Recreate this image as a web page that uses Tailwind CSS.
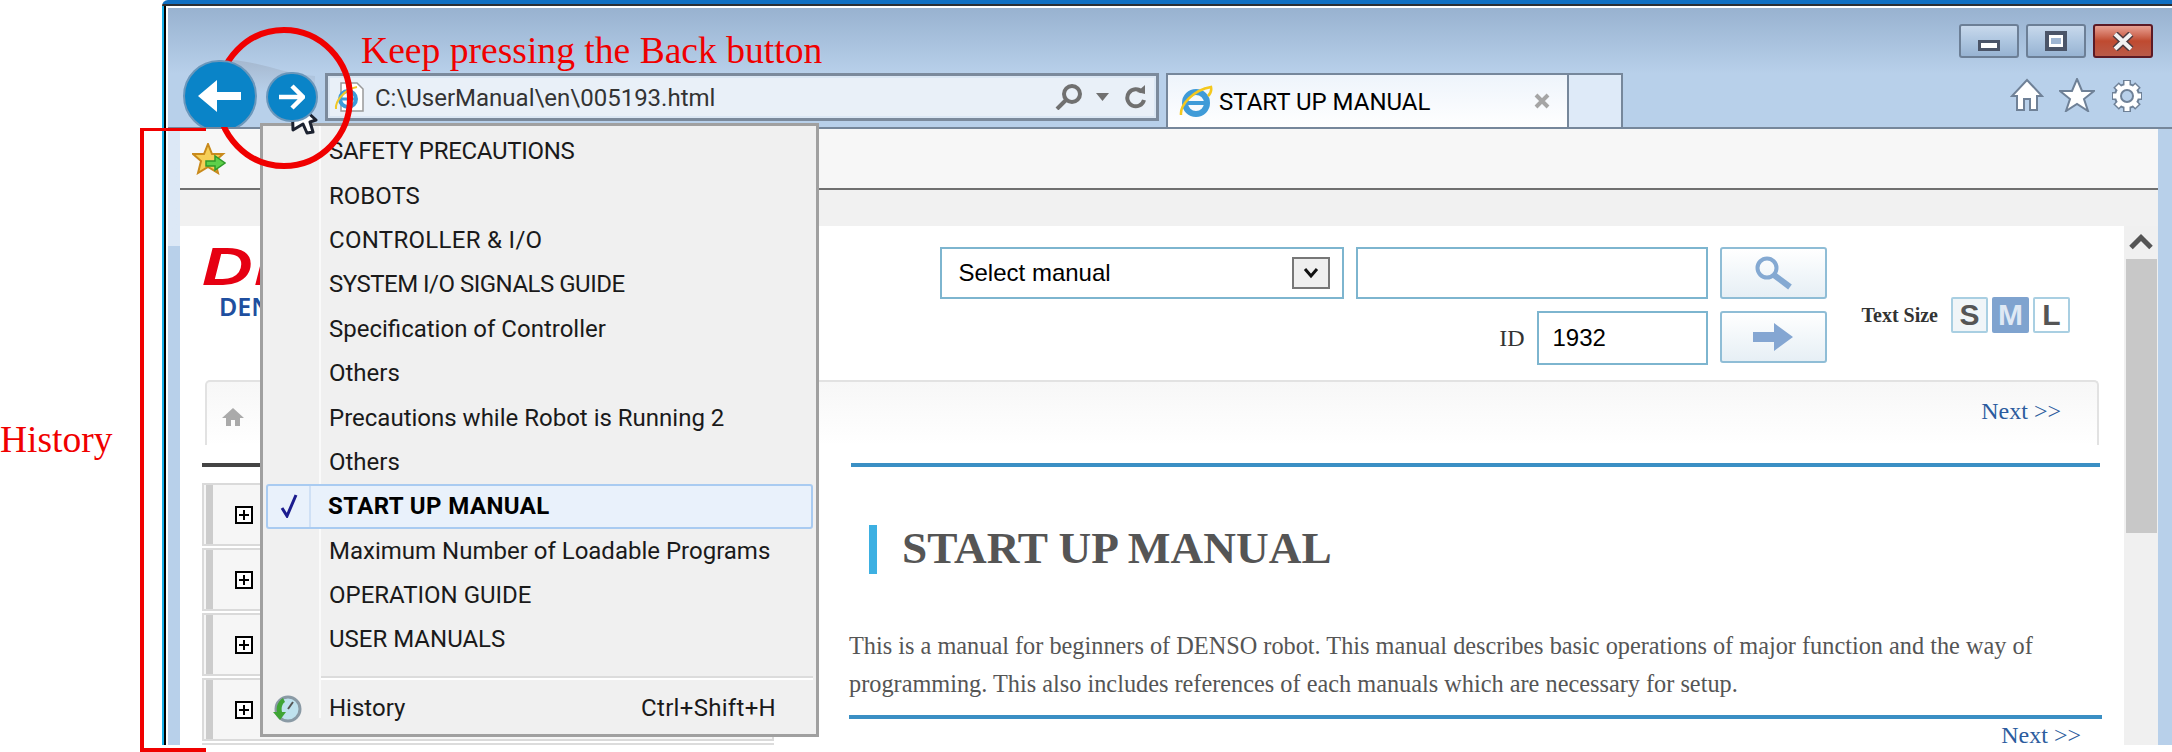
<!DOCTYPE html>
<html>
<head>
<meta charset="utf-8">
<title>Keep pressing the Back button</title>
<script src="https://cdn.jsdelivr.net/npm/@tailwindcss/browser@4"></script>
</head>
<body class="bg-white">
<div class="relative w-[2172px] h-[752px] overflow-hidden bg-white font-['Liberation_Serif',serif]">

    <!-- browser window -->
    <div class="ml-[162px] h-[745px] flex flex-col overflow-hidden rounded-tl-[6px]">
        <div class="h-[4px] bg-[#0f6fc2] shrink-0"></div>
        <div class="h-[2px] bg-[#2b2f33] shrink-0"></div>
        <div class="flex-1 flex min-h-0 border-l-[2px] border-[#17aee6]">
            <div class="flex-1 flex min-w-0 border-l-[2px] border-black">
                <div class="flex-1 flex flex-col min-w-0 border-l-[2px] border-white">

                    <!-- chrome -->
                    <div class="h-[123px] shrink-0 flex items-start overflow-hidden border-b-[2px] border-[#76879b] bg-gradient-to-b from-[#98b2d0] to-[#b8d0ea] to-[55%] border-t-[2px] border-t-white relative">
                        <svg class="absolute left-[55px] top-[50px]" width="100" height="50" viewBox="0 0 100 50">
                            <defs><linearGradient id="halo" x1="0" y1="0" x2="0" y2="1"><stop offset="0" stop-color="#a5b8cf"/><stop offset="0.7" stop-color="#b8d0ea"/></linearGradient></defs>
                            <path d="M8 2 C40 4 60 16 92 18 L92 48 L8 48 Z" fill="url(#halo)"/>
                        </svg>
                        <div class="w-[74px] h-[72px] ml-[15px] mt-[52px] rounded-full bg-[#0a84c8] border-[2px] border-[#6b97bb] flex items-center justify-center shrink-0 relative z-10">
                            <svg width="46" height="34" viewBox="0 0 46 34"><path d="M1 17 L20 1 V13 H44 V21 H20 V33 Z" fill="#fff"/></svg>
                        </div>
                        <div class="w-[52px] h-[50px] ml-[9px] mt-[64px] rounded-full bg-[#0a84c8] border-[2px] border-[#6b97bb] flex items-center justify-center shrink-0 relative z-10">
                            <svg width="26" height="26" viewBox="0 0 26 26"><path d="M0 13 H24 M13 2 L24 13 L13 24" fill="none" stroke="#fff" stroke-width="4.5"/></svg>
                        </div>
                        <!-- address bar -->
                        <div class="w-[834px] h-[48px] ml-[7px] mt-[65px] shrink-0 flex items-center border-[3px] border-[#7b8a9c] outline-[2px] outline-[#dbe7f4] outline-offset-[-5px] bg-[#e9f0f8]">
                            <svg class="ml-[5px] shrink-0" width="32" height="32" viewBox="0 0 32 32">
                                <path d="M8 2 H24 L30 8 V30 H8 Z" fill="#fff" stroke="#999" stroke-width="1.5"/>
                                <circle cx="15" cy="18" r="8" fill="none" stroke="#3f9bd8" stroke-width="4"/>
                                <path d="M8 18 H23" stroke="#3f9bd8" stroke-width="3"/>
                                <path d="M3 28 C2 20 12 8 24 6" fill="none" stroke="#f0c92a" stroke-width="2"/>
                            </svg>
                            <span class="ml-[10px] mt-[2px] font-['Roboto',sans-serif] text-[24px] leading-none text-[#333] w-[680px]">C:\UserManual\en\005193.html</span>
                            <svg class="shrink-0" width="28" height="26" viewBox="0 0 28 26"><circle cx="17" cy="10" r="8" fill="none" stroke="#707070" stroke-width="4"/><path d="M11 16 L2 25" stroke="#707070" stroke-width="4"/></svg>
                            <svg class="ml-[13px] shrink-0" width="13" height="8" viewBox="0 0 13 8"><path d="M0 0 H13 L6.5 8 Z" fill="#707070"/></svg>
                            <svg class="ml-[16px] shrink-0" width="22" height="24" viewBox="0 0 22 24"><path d="M17 7 A8.5 8.5 0 1 0 19 15" fill="none" stroke="#707070" stroke-width="4"/><path d="M12 7 L20 0 V9 Z" fill="#707070"/></svg>
                        </div>
                        <!-- tab -->
                        <div class="w-[403px] h-[56px] ml-[7px] mt-[65px] shrink-0 flex items-start pt-[12px] pl-[11px] border-[2px] border-b-0 border-[#76879b] bg-gradient-to-b from-[#eef4fb] to-white">
                            <svg class="-mt-[2px] shrink-0" width="34" height="34" viewBox="0 0 34 34">
                                <circle cx="17" cy="18" r="11" fill="none" stroke="#3f9bd8" stroke-width="6"/>
                                <path d="M7 18 H27" stroke="#3f9bd8" stroke-width="4"/>
                                <path d="M2 30 C1 20 14 5 32 2 C33 6 31 9 29 11" fill="none" stroke="#f4c81e" stroke-width="2.5"/>
                            </svg>
                            <span class="ml-[6px] font-['Roboto',sans-serif] text-[24px] leading-[30px] text-black w-[315px]">START UP MANUAL</span>
                            <svg class="mt-[6px] shrink-0" width="16" height="16" viewBox="0 0 16 16"><path d="M2 2 L14 14 M14 2 L2 14" stroke="#a5a5a5" stroke-width="4"/></svg>
                        </div>
                        <div class="w-[56px] h-[56px] mt-[65px] -ml-[2px] shrink-0 border-[2px] border-b-0 border-[#76879b] bg-[#deeaf8]"></div>

                        <div class="ml-auto mr-[19px] mt-[16px] flex flex-col shrink-0">
                            <div class="flex gap-[7px]">
                                <div class="w-[60px] h-[34px] rounded-[3px] border-[2px] border-[#6c7f96] bg-gradient-to-b from-[#c8d9ec] via-[#aec6e0] to-[#97b3d2] flex items-end justify-center pb-[5px]">
                                    <div class="w-[22px] h-[11px] bg-white border-[3px] border-[#4b5568]"></div>
                                </div>
                                <div class="w-[60px] h-[34px] rounded-[3px] border-[2px] border-[#6c7f96] bg-gradient-to-b from-[#c8d9ec] via-[#aec6e0] to-[#97b3d2] flex items-center justify-center">
                                    <div class="w-[22px] h-[20px] bg-white border-[4px] border-[#4b5568] flex items-center justify-center"><div class="w-[10px] h-[6px] bg-[#9fb6d2]"></div></div>
                                </div>
                                <div class="w-[60px] h-[34px] rounded-[3px] border-[2px] border-[#5c1a25] bg-gradient-to-b from-[#e8a093] via-[#bf4a30] to-[#b95a48] flex items-center justify-center">
                                    <svg width="22" height="19" viewBox="0 0 22 19"><path d="M3 2 L19 17 M19 2 L3 17" stroke="#4d3a3f" stroke-width="7"/><path d="M3 2 L19 17 M19 2 L3 17" stroke="#f2f2f2" stroke-width="4"/></svg>
                                </div>
                            </div>
                            <div class="flex justify-end gap-[15px] pr-[9px] mt-[20px]">
                                <svg width="34" height="34" viewBox="0 0 34 34"><path d="M17 2 L32 18 H27 V32 H20 V21 H14 V32 H7 V18 H2 Z" fill="#fff" stroke="#6f8197" stroke-width="2"/></svg>
                                <svg width="36" height="34" viewBox="0 0 36 34"><path d="M18 1 L23 13 L35 13 L25 21 L29 33 L18 26 L7 33 L11 21 L1 13 L13 13 Z" fill="#fff" stroke="#6f8197" stroke-width="2"/></svg>
                                <svg width="34" height="36" viewBox="0 0 34 36">
                                    <path d="M17 2 V34 M2 18 H32 M6 7 L28 29 M28 7 L6 29" stroke="#6f8197" stroke-width="8"/>
                                    <circle cx="17" cy="18" r="12" fill="#fff" stroke="#6f8197" stroke-width="2"/>
                                    <path d="M17 3 V33 M3 18 H31 M7 8 L27 28 M27 8 L7 28" stroke="#fff" stroke-width="5"/>
                                    <circle cx="17" cy="18" r="6" fill="#b8d0ea" stroke="#6f8197" stroke-width="2"/>
                                </svg>
                            </div>
                        </div>
                    </div>

                    <!-- below the chrome: side frames and the page -->
                    <div class="flex-1 flex min-h-0">
                        <div class="w-[12px] shrink-0 bg-gradient-to-b from-[#dce8f6] from-[19%] to-[#b8d0ea] to-[19%]"></div>
                        <div class="flex-1 flex flex-col min-w-0">
                            <!-- favorites bar -->
                            <div class="h-[61px] shrink-0 bg-[#f7f7f7] border-b-[2px] border-[#707070] flex items-center pl-[12px]">
                                <svg width="34" height="32" viewBox="0 0 34 32">
                                    <path d="M16 1 L20 11 L31 11 L23 18 L26 30 L16 24 L6 30 L9 18 L1 11 L12 11 Z" fill="#f6cf57" stroke="#c98a1c" stroke-width="2"/>
                                    <path d="M14 18 H23 V13 L33 20 L23 27 V23 H14 Z" fill="#5ed04a" stroke="#2f9a2a" stroke-width="1.5"/>
                                </svg>
                            </div>
                            <div class="h-[36px] shrink-0 bg-[#f1f1f1]"></div>

                            <div class="flex-1 flex min-h-0">
                                <!-- page -->
                                <div class="flex-1 min-w-0 bg-white flex flex-col overflow-hidden">
                                    <div class="h-[154px] shrink-0 flex items-start justify-between pl-[22px] pr-[54px] pt-[21px]">
                                        <div>
                                            <div class="origin-left scale-x-[1.3] font-['Liberation_Sans',sans-serif] font-bold italic text-[#e60012] text-[54px] leading-[38px] tracking-[1px]">DENSO</div>
                                            <div class="mt-[10px] ml-[17px] font-['Noto_Sans',sans-serif] font-semibold text-[#1f4f9f] text-[25px] leading-[22px]">DENSO ROBOT</div>
                                        </div>
                                        <div class="flex items-start font-['Liberation_Sans',sans-serif] text-[24px] text-black">
                                            <div class="flex flex-col items-end gap-[12px]">
                                                <div class="flex gap-[12px]">
                                                    <div class="w-[404px] h-[52px] border-[2px] border-[#7db5cf] flex items-center justify-between pl-[17px] pr-[12px]">
                                                        <span>Select manual</span>
                                                        <div class="w-[38px] h-[32px] bg-[#efefef] border-[2px] border-[#777] flex items-center justify-center">
                                                            <svg width="16" height="12" viewBox="0 0 16 12"><path d="M2 2 L8 9 L14 2" fill="none" stroke="#111" stroke-width="3"/></svg>
                                                        </div>
                                                    </div>
                                                    <div class="w-[352px] h-[52px] border-[2px] border-[#7db5cf]"></div>
                                                    <div class="w-[107px] h-[52px] rounded-[3px] border-[2px] border-[#8fbdd6] bg-gradient-to-b from-white to-[#e6eff5] flex items-center justify-center">
                                                        <svg width="42" height="34" viewBox="0 0 42 34"><circle cx="15" cy="12" r="9.5" fill="none" stroke="#84a9d2" stroke-width="4"/><path d="M22 19 L38 31" stroke="#84a9d2" stroke-width="6"/></svg>
                                                    </div>
                                                </div>
                                                <div class="flex items-start gap-[12px]">
                                                    <div class="flex items-center gap-[12px]">
                                                        <span class="font-['Liberation_Serif',serif] text-[#333] h-[54px] leading-[54px]">ID</span>
                                                        <div class="w-[171px] h-[54px] border-[2px] border-[#7db5cf] flex items-center pl-[14px]">1932</div>
                                                    </div>
                                                    <div class="w-[107px] h-[52px] rounded-[3px] border-[2px] border-[#8fbdd6] bg-gradient-to-b from-white to-[#e6eff5] flex items-center justify-center">
                                                        <svg width="40" height="28" viewBox="0 0 40 28"><path d="M0 9 H21 V0 L40 14 L21 28 V19 H0 Z" fill="#84a6d2"/></svg>
                                                    </div>
                                                </div>
                                            </div>
                                            <div class="flex items-center ml-[35px] mt-[50px]">
                                                <span class="font-['Liberation_Serif',serif] font-bold text-[20px] text-[#333] mr-[13px]">Text Size</span>
                                                <div class="flex gap-[4px] font-['Liberation_Sans',sans-serif] font-bold text-[30px] leading-none">
                                                    <div class="w-[37px] h-[36px] rounded-[2px] border-[2px] border-[#a9cfe2] bg-[#f0f5f8] text-[#555] flex items-center justify-center">S</div>
                                                    <div class="w-[37px] h-[36px] rounded-[2px] bg-[#7fa3cf] text-[#dfe9f4] flex items-center justify-center">M</div>
                                                    <div class="w-[37px] h-[36px] rounded-[2px] border-[2px] border-[#a9cfe2] bg-white text-[#555] flex items-center justify-center">L</div>
                                                </div>
                                            </div>
                                        </div>
                                    </div>

                                    <!-- breadcrumb -->
                                    <div class="h-[65px] shrink-0 ml-[25px] w-[1894px] rounded-t-[5px] border-t-[2px] border-x-[2px] border-[#e2e2e2] border-b-0 bg-gradient-to-b from-[#f7f7f7] to-white flex items-center justify-between pl-[16px] pr-[36px]">
                                        <svg class="mt-[6px] -ml-[2px]" width="24" height="20" viewBox="0 0 24 20"><path d="M12 1 L23 11 H19 V19 H14 V13 H10 V19 H5 V11 H1 Z" fill="#aaa"/></svg>
                                        <span class="-mt-[6px] text-[24px] text-[#2c5c9e]">Next &gt;&gt;</span>
                                    </div>

                                    <div class="flex mt-[18px] pl-[22px]">
                                        <!-- tree -->
                                        <div class="w-[572px] shrink-0">
                                            <div class="h-[4px] bg-[#444]"></div>
                                            <div class="mt-[16px] flex flex-col gap-[2px]">
                                                <div class="h-[63px] border-[2px] border-[#dadada] flex items-center bg-[#f6f6f6]"><div class="ml-[2px] w-[7px] h-full bg-[#cccccc]"></div><div class="ml-[22px] w-[18px] h-[18px] border-[2px] border-black bg-white flex items-center justify-center"><svg width="10" height="10" viewBox="0 0 10 10"><path d="M5 0 V10 M0 5 H10" stroke="#000" stroke-width="2"/></svg></div></div>
                                                <div class="h-[63px] border-[2px] border-[#dadada] flex items-center bg-[#f6f6f6]"><div class="ml-[2px] w-[7px] h-full bg-[#cccccc]"></div><div class="ml-[22px] w-[18px] h-[18px] border-[2px] border-black bg-white flex items-center justify-center"><svg width="10" height="10" viewBox="0 0 10 10"><path d="M5 0 V10 M0 5 H10" stroke="#000" stroke-width="2"/></svg></div></div>
                                                <div class="h-[63px] border-[2px] border-[#dadada] flex items-center bg-[#f6f6f6]"><div class="ml-[2px] w-[7px] h-full bg-[#cccccc]"></div><div class="ml-[22px] w-[18px] h-[18px] border-[2px] border-black bg-white flex items-center justify-center"><svg width="10" height="10" viewBox="0 0 10 10"><path d="M5 0 V10 M0 5 H10" stroke="#000" stroke-width="2"/></svg></div></div>
                                                <div class="h-[63px] border-[2px] border-[#dadada] flex items-center bg-[#f6f6f6]"><div class="ml-[2px] w-[7px] h-full bg-[#cccccc]"></div><div class="ml-[22px] w-[18px] h-[18px] border-[2px] border-black bg-white flex items-center justify-center"><svg width="10" height="10" viewBox="0 0 10 10"><path d="M5 0 V10 M0 5 H10" stroke="#000" stroke-width="2"/></svg></div></div>
                                            </div>
                                            <div class="mt-[2px] h-[3px] bg-[#dcdcdc]"></div>
                                        </div>
                                        <!-- content -->
                                        <div class="ml-[75px] w-[1253px] shrink-0">
                                            <div class="ml-[2px] w-[1249px] h-[4px] bg-[#3a8fc4]"></div>
                                            <div class="mt-[58px] ml-[20px] h-[49px] flex items-center border-l-[8px] border-[#3db0e2] pl-[25px]">
                                                <h1 class="-mt-[2px] font-bold text-[45.3px] leading-none text-[#555]">START UP MANUAL</h1>
                                            </div>
                                            <p class="mt-[53px] text-[24.3px] leading-[38px] text-[#555] whitespace-nowrap">This is a manual for beginners of DENSO robot. This manual describes basic operations of major function and the way of<br>programming. This also includes references of each manuals which are necessary for setup.</p>
                                            <div class="mt-[12px] h-[4px] bg-[#3a8fc4]"></div>
                                            <div class="pr-[21px] text-right text-[24px] leading-[26px] text-[#2c5c9e] mt-[3px]">Next &gt;&gt;</div>
                                        </div>
                                    </div>
                                </div>
                                <!-- scrollbar -->
                                <div class="w-[34px] shrink-0 bg-[#f0f0f0] flex flex-col items-center">
                                    <svg class="mt-[0px] h-[33px]" width="24" height="16" viewBox="0 0 24 16"><path d="M2 13 L12 3 L22 13" fill="none" stroke="#555" stroke-width="5"/></svg>
                                    <div class="w-[31px] h-[274px] bg-[#c8c8c8]"></div>
                                </div>
                            </div>
                        </div>
                        <div class="w-[14px] shrink-0 bg-[#b8d0ea]"></div>
                    </div>
                </div>
            </div>
        </div>
    </div>

    <!-- history menu -->
    <div class="absolute left-[260px] top-[123px] w-[559px] h-[614px] bg-[#f0f0f0] border-[3px] border-[#a0a0a0] font-['Roboto',sans-serif] text-[24px] text-[#1a1a1a] pt-[3px]">
        <div class="absolute left-[56px] top-0 bottom-[16px] w-[2px] bg-[#fafafa]"></div>
        <div class="h-[44.4px] flex items-center pl-[66px] tracking-[-0.3px]">SAFETY PRECAUTIONS</div>
        <div class="h-[44.4px] flex items-center pl-[66px]">ROBOTS</div>
        <div class="h-[44.4px] flex items-center pl-[66px] tracking-[0.3px]">CONTROLLER &amp; I/O</div>
        <div class="h-[44.4px] flex items-center pl-[66px] tracking-[-0.5px]">SYSTEM I/O SIGNALS GUIDE</div>
        <div class="h-[44.4px] flex items-center pl-[66px]">Specification of Controller</div>
        <div class="h-[44.4px] flex items-center pl-[66px]">Others</div>
        <div class="h-[44.4px] flex items-center pl-[66px]">Precautions while Robot is Running 2</div>
        <div class="h-[44.4px] flex items-center pl-[66px]">Others</div>
        <div class="relative h-[44.4px] mx-[3px] flex items-center rounded-[3px] border-[2px] border-[#a9cbf1] bg-[#e9f1fb] font-bold text-black">
            <div class="w-[43px] h-full shrink-0 border-r-[2px] border-[#cfe0f5] flex items-center justify-center">
                <svg width="18" height="24" viewBox="0 0 18 24"><path d="M2 14 L7 22 L16 1" fill="none" stroke="#1c1c8e" stroke-width="3"/></svg>
            </div>
            <span class="ml-[17px] tracking-[0.4px]">START UP MANUAL</span>
        </div>
        <div class="h-[44.4px] flex items-center pl-[66px]">Maximum Number of Loadable Programs</div>
        <div class="h-[44.4px] flex items-center pl-[66px]">OPERATION GUIDE</div>
        <div class="h-[44.4px] flex items-center pl-[66px]">USER MANUALS</div>
        <div class="ml-[58px] mr-[3px] mt-[14px] h-[4px] border-t-[2px] border-[#dcdcdc] border-b-[2px] border-b-white"></div>
        <div class="h-[54px] flex items-center pl-[66px] pr-[40px] pt-[3px] justify-between relative">
            <svg class="absolute left-[9px] top-[14px]" width="30" height="30" viewBox="0 0 30 30">
                <circle cx="16" cy="15" r="12" fill="#bfe2ee" stroke="#8a9aa5" stroke-width="3"/>
                <path d="M16 15 L21 8" stroke="#555" stroke-width="2"/>
                <path d="M11 4 C5 8 4 14 5 18 L1 18 L8 26 L14 18 L10 18 C9 14 10 10 13 8 Z" fill="#3fa535"/>
            </svg>
            <span>History</span><span class="tracking-[0.3px]">Ctrl+Shift+H</span>
        </div>
    </div>

    <!-- mouse pointer -->
    <svg class="absolute left-[290px] top-[96px]" width="28" height="40" viewBox="0 0 28 40">
        <path d="M2 2 L3 34 L13 28 L17 37 L23 36 L20 26 L26 24 Z" fill="#fff" stroke="#1c2230" stroke-width="3" stroke-linejoin="round"/>
    </svg>

    <!-- red annotations -->
    <svg class="absolute left-[210px] top-[24px]" width="148" height="148" viewBox="0 0 148 148">
        <ellipse cx="74" cy="74" rx="66" ry="68" fill="none" stroke="#f00000" stroke-width="6"/>
    </svg>
    <div class="absolute left-[361px] top-[29px] text-[37.6px] leading-[43px] text-[#f00000] whitespace-nowrap">Keep pressing the Back button</div>
    <div class="absolute left-0 top-[418px] text-[37.5px] leading-[43px] text-[#f00000]">History</div>
    <div class="absolute left-[140px] top-[128px] w-[66px] h-[624px] border-l-[4px] border-t-[3px] border-b-[4px] border-[#f00000]"></div>
</div>
</body>
</html>
